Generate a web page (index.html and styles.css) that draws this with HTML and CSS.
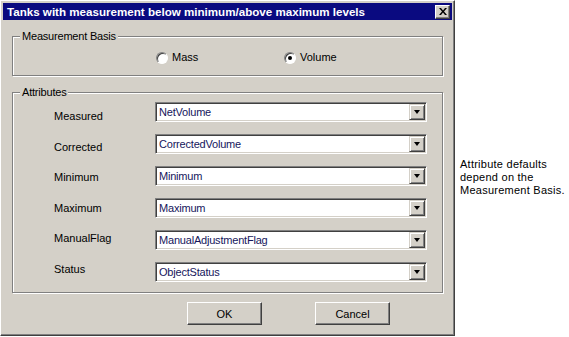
FILE: index.html
```html
<!DOCTYPE html>
<html lang="en">
<head>
	<meta charset="UTF-8">
	<title>Tanks with measurement below minimum/above maximum levels</title>
	<link rel="stylesheet" href="styles.css">
</head>
<body>
	<div class="page">
		<div class="dialog">
			<div class="titlebar">
				<span class="title">Tanks with measurement below minimum/above maximum levels</span>
				<span class="close-btn">
					<svg width="8" height="7" viewBox="0 0 8 7"><path d="M0 0h2l2 2.5L6 0h2L5 3.5 8 7H6L4 4.5 2 7H0l3-3.5z" fill="#000"/></svg>
				</span>
			</div>
			<div class="body">
				<!-- 计量基准 -->
				<fieldset class="group basis">
					<legend>Measurement Basis</legend>
					<div class="radios">
						<label class="radio mass"><span class="dot"></span>Mass</label>
						<label class="radio"><span class="dot checked"></span>Volume</label>
					</div>
				</fieldset>
				<!-- 属性 -->
				<fieldset class="group attrs">
					<legend>Attributes</legend>
					<div class="attr-grid">
						<div class="names">
							<div class="name">Measured</div>
							<div class="name">Corrected</div>
							<div class="name">Minimum</div>
							<div class="name">Maximum</div>
							<div class="name">ManualFlag</div>
							<div class="name">Status</div>
						</div>
						<div class="combos">
							<div class="combo"><span class="combo-text">NetVolume</span><span class="combo-btn"></span></div>
							<div class="combo"><span class="combo-text">CorrectedVolume</span><span class="combo-btn"></span></div>
							<div class="combo"><span class="combo-text">Minimum</span><span class="combo-btn"></span></div>
							<div class="combo"><span class="combo-text">Maximum</span><span class="combo-btn"></span></div>
							<div class="combo"><span class="combo-text">ManualAdjustmentFlag</span><span class="combo-btn"></span></div>
							<div class="combo"><span class="combo-text">ObjectStatus</span><span class="combo-btn"></span></div>
						</div>
					</div>
				</fieldset>
				<div class="buttons">
					<button type="button" class="btn">OK</button>
					<button type="button" class="btn">Cancel</button>
				</div>
			</div>
		</div>
		<p class="note">Attribute defaults<br>depend on the<br>Measurement Basis.</p>
	</div>
</body>
</html>
```

FILE: styles.css
```css
body{
	margin: 0;
	background-color: #fff;
	font-family: "Liberation Sans", Arial, sans-serif;
	font-size: 11px;
	color: #000;
}
.page{
	display: flex;
	align-items: flex-start;
}
.dialog{
	box-sizing: border-box;
	width: 455px;
	height: 336px;
	flex-shrink: 0;
	background-color: #d4d0c8;
	border: 1px solid;
	border-color: #fff #404040 #404040 #fff;
	box-shadow: inset -1px -1px 0 #808080;
	padding: 2px 2px 0 2px;
}
.titlebar{
	height: 17px;
	display: flex;
	align-items: center;
	justify-content: space-between;
	background-color: #0a0a80;
	color: #fff;
	padding: 0 2px 0 4px;
}
.title{
	font-weight: bold;
	font-size: 11.6px;
}
.close-btn{
	box-sizing: border-box;
	width: 15px;
	height: 14px;
	display: flex;
	align-items: center;
	justify-content: center;
	background-color: #d4d0c8;
	border: 1px solid;
	border-color: #fff #404040 #404040 #fff;
	box-shadow: inset -1px -1px 0 #808080;
}
.body{
	padding: 0 9px;
}
.group{
	margin: 0;
	padding: 0;
	min-width: 0;
	border: 1px solid #808080;
	box-shadow: inset 1px 1px 0 #fff, 1px 1px 0 #fff;
}
.group legend{
	margin-left: 7px;
	padding: 0 2px;
	line-height: 13px;
	letter-spacing: -0.2px;
	background-color: #d4d0c8;
}
.basis{
	margin-top: 10px;
}
.radios{
	display: flex;
	align-items: center;
	padding: 8px 0 11px 143px;
	line-height: 13px;
}
.radio{
	display: flex;
	align-items: center;
	gap: 4px;
}
.radio.mass{
	width: 128px;
}
.dot{
	box-sizing: border-box;
	width: 12px;
	height: 12px;
	border-radius: 50%;
	border: 1px solid;
	border-color: #808080 #fff #fff #808080;
	box-shadow: inset 1px 1px 0 #404040;
	background-color: #fff;
	display: flex;
	align-items: center;
	justify-content: center;
}
.dot.checked::after{
	content: "";
	width: 4px;
	height: 4px;
	border-radius: 50%;
	background-color: #000;
}
.attrs{
	margin-top: 10px;
}
.attr-grid{
	display: flex;
	padding-left: 41px;
}
.names{
	width: 101px;
	padding-top: 11px;
	display: flex;
	flex-direction: column;
	gap: 17.5px;
}
.name{
	line-height: 13px;
}
.combos{
	width: 272px;
	padding: 3px 0 10px;
	display: flex;
	flex-direction: column;
	gap: 12px;
}
.combo{
	box-sizing: border-box;
	height: 20px;
	display: flex;
	background-color: #fff;
	border: 1px solid;
	border-color: #808080 #fff #fff #808080;
	box-shadow: inset 1px 1px 0 #404040, inset -1px -1px 0 #d4d0c8;
	padding: 1px;
}
.combo-text{
	flex: 1;
	padding-left: 2px;
	line-height: 16px;
	color: #16165c;
	letter-spacing: -0.2px;
}
.combo-btn{
	box-sizing: border-box;
	width: 16px;
	height: 16px;
	background-color: #d4d0c8;
	border: 1px solid;
	border-color: #d4d0c8 #404040 #404040 #d4d0c8;
	box-shadow: inset 1px 1px 0 #fff, inset -1px -1px 0 #808080;
	display: flex;
	align-items: center;
	justify-content: center;
}
.combo-btn::after{
	content: "";
	border-left: 3.5px solid transparent;
	border-right: 3.5px solid transparent;
	border-top: 4px solid #000;
}
.buttons{
	display: flex;
	gap: 53px;
	margin-top: 9px;
	padding-left: 175px;
}
.btn{
	box-sizing: border-box;
	width: 75px;
	height: 23px;
	padding: 0;
	font-family: "Liberation Sans", Arial, sans-serif;
	font-size: 11px;
	color: #000;
	background-color: #d4d0c8;
	border: 1px solid;
	border-color: #fff #404040 #404040 #fff;
	box-shadow: inset -1px -1px 0 #808080;
}
.note{
	margin: 158px 0 0 5px;
	font-size: 11px;
	letter-spacing: 0.25px;
	line-height: 13px;
	white-space: nowrap;
}
```
